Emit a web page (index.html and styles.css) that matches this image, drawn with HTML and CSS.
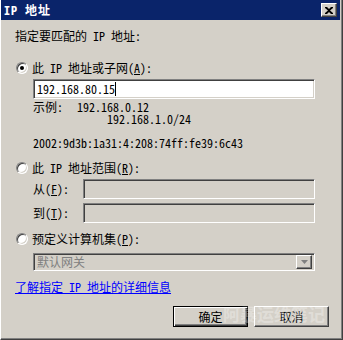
FILE: index.html
```html
<!DOCTYPE html>
<html lang="zh-CN">
<head>
    <meta charset="UTF-8">
    <title>IP 地址</title>
    <link rel="stylesheet" href="styles.css">
</head>
<body>
    <div class="window">
        <div class="titlebar">
            <span class="title">IP 地址</span>
            <span class="close-btn">
                <svg width="8" height="7" viewBox="0 0 8 7"><path d="M0 0h2l2 2 2-2h2v1L5 3.5 8 6v1H6L4 5 2 7H0V6l3-2.5L0 1z" fill="#000"/></svg>
            </span>
        </div>

        <div class="content">
            <p class="intro">指定要匹配的 IP 地址:</p>

            <div class="option">
                <span class="radio checked"></span>
                <span>此 IP 地址或子网(<u>A</u>):</span>
            </div>
            <div class="indent">
                <div class="field">192.168.80.15<span class="caret"></span></div>
                <div class="example">
                    <span class="ex-label">示例:</span>
                    <span class="ex-values">192.168.0.12<br>     192.168.1.0/24</span>
                </div>
                <p class="ipv6">2002:9d3b:1a31:4:208:74ff:fe39:6c43</p>
            </div>

            <div class="option opt-range">
                <span class="radio"></span>
                <span>此 IP 地址范围(<u>R</u>):</span>
            </div>
            <div class="indent range">
                <label>从(<u>F</u>):</label>
                <div class="field disabled"></div>
                <label>到(<u>T</u>):</label>
                <div class="field disabled"></div>
            </div>

            <div class="option opt-set">
                <span class="radio"></span>
                <span>预定义计算机集(<u>P</u>):</span>
            </div>
            <div class="indent">
                <div class="select">
                    <span>默认网关</span>
                    <span class="drop">
                        <svg width="7" height="4" viewBox="0 0 7 4"><path d="M0 0h7L3.5 4z" fill="#808080"/></svg>
                    </span>
                </div>
            </div>

            <a class="help-link" href="#">了解指定 IP 地址的详细信息</a>

            <div class="buttons">
                <span class="btn default">确定</span>
                <span class="btn">取消</span>
            </div>
        </div>

        <div class="watermark">阿暴运维笔记</div>
    </div>
</body>
</html>
```

FILE: styles.css
```css
* {
    margin: 0;
    padding: 0;
    box-sizing: border-box;
}

body {
    width: 343px;
    height: 340px;
    overflow: hidden;
    background: #d4d0c8;
    font-family: "Noto Sans Mono CJK SC", "Noto Sans CJK SC", "Liberation Mono", monospace;
    font-size: 12px;
    line-height: 12px;
    color: #000;
}

.window {
    position: relative;
    width: 343px;
    height: 340px;
    background: #d4d0c8;
    border-left: 1px solid #ffffff;
    border-right: 1px solid #404040;
    border-bottom: 1px solid #404040;
    box-shadow: inset -1px -1px #808080;
}

.titlebar {
    height: 20px;
    margin-right: 2px;
    background: #0a246a;
    display: flex;
    align-items: center;
    justify-content: space-between;
    padding: 0 3px 0 3px;
}

.title {
    color: #fff;
    font-weight: bold;
    font-size: 12px;
    letter-spacing: 1px;
}

.close-btn {
    width: 16px;
    height: 14px;
    background: #d4d0c8;
    display: flex;
    align-items: center;
    justify-content: center;
    border-top: 1px solid #fff;
    border-left: 1px solid #fff;
    border-right: 1px solid #404040;
    border-bottom: 1px solid #404040;
    box-shadow: inset -1px -1px #808080;
}

.content {
    padding-left: 14px;
    padding-right: 27px;
}

.intro {
    margin-top: 10px;
}

.option {
    display: flex;
    align-items: center;
    gap: 4px;
    margin-top: 20px;
    height: 12px;
}

.option u,
.range u {
    text-decoration: underline;
}

.radio {
    width: 12px;
    height: 12px;
    border-radius: 50%;
    background: #fff;
    border: 1px solid;
    border-color: #808080 #ffffff #ffffff #808080;
    box-shadow: inset 1px 1px #404040, inset -1px -1px #d4d0c8;
    position: relative;
    margin-left: 1px;
}

.radio.checked::after {
    content: "";
    position: absolute;
    left: 3px;
    top: 3px;
    width: 4px;
    height: 4px;
    border-radius: 50%;
    background: #000;
}

.indent {
    padding-left: 18px;
}

.field {
    height: 20px;
    margin-top: 5px;
    background: #fff;
    border: 1px solid;
    border-color: #808080 #ffffff #ffffff #808080;
    box-shadow: inset 1px 1px #404040, inset -1px -1px #d4d0c8;
    padding: 3px 3px;
    display: flex;
    align-items: center;
}

.field.disabled {
    background: #d4d0c8;
    margin-top: 0;
}

.caret {
    width: 1px;
    height: 14px;
    background: #000;
}

.example {
    display: flex;
    margin-top: 2px;
    line-height: 12px;
}

.ex-label {
    width: 44px;
}

.ex-values {
    white-space: pre;
}

.ipv6 {
    margin-top: 12px;
}

.opt-range {
    margin-top: 13px;
}

.range {
    display: grid;
    grid-template-columns: 50px 1fr;
    row-gap: 4px;
    align-items: center;
    margin-top: 5px;
}

.opt-set {
    margin-top: 10px;
}

.select {
    height: 18px;
    margin-top: 8px;
    background: #d4d0c8;
    border: 1px solid;
    border-color: #808080 #ffffff #ffffff #808080;
    box-shadow: inset 1px 1px #404040, inset -1px -1px #d4d0c8;
    display: flex;
    align-items: center;
    justify-content: space-between;
    padding: 2px 2px 2px 3px;
    color: #808080;
}

.drop {
    width: 16px;
    height: 14px;
    display: flex;
    align-items: center;
    justify-content: center;
    border-top: 1px solid #fff;
    border-left: 1px solid #fff;
    border-right: 1px solid #404040;
    border-bottom: 1px solid #404040;
    box-shadow: inset -1px -1px #808080;
}

.help-link {
    display: block;
    margin-top: 10px;
    color: #0000ff;
    text-decoration: underline;
    width: max-content;
}

.buttons {
    display: flex;
    justify-content: flex-end;
    gap: 6px;
    margin-top: 13px;
    margin-right: -14px;
}

.btn {
    width: 75px;
    height: 21px;
    display: flex;
    align-items: center;
    justify-content: center;
    background: #d4d0c8;
    border-top: 1px solid #fff;
    border-left: 1px solid #fff;
    border-right: 1px solid #404040;
    border-bottom: 1px solid #404040;
    box-shadow: inset -1px -1px #808080;
}

.btn.default {
    border: 1px solid #000;
    box-shadow: inset 1px 1px #fff, inset -1px -1px #404040, inset -2px -2px #808080;
}

.watermark {
    position: absolute;
    left: 222px;
    top: 304px;
    font-family: "Noto Sans CJK SC", sans-serif;
    font-weight: bold;
    font-size: 17px;
    line-height: 20px;
    color: rgba(255, 255, 255, 0.3);
    pointer-events: none;
}
```
